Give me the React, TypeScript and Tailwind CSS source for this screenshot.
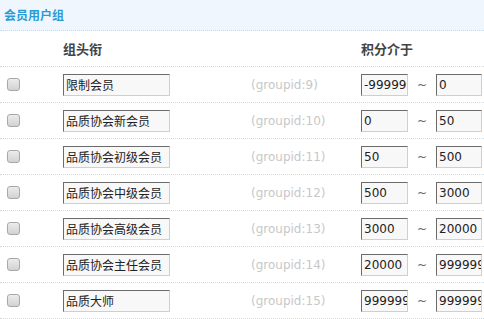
import React from 'react';

interface Group {
  id: number;
  name: string;
  min: string;
  max: string;
}

const groups: Group[] = [
  { id: 9, name: '限制会员', min: '-999999', max: '0' },
  { id: 10, name: '品质协会新会员', min: '0', max: '50' },
  { id: 11, name: '品质协会初级会员', min: '50', max: '500' },
  { id: 12, name: '品质协会中级会员', min: '500', max: '3000' },
  { id: 13, name: '品质协会高级会员', min: '3000', max: '20000' },
  { id: 14, name: '品质协会主任会员', min: '20000', max: '999999' },
  { id: 15, name: '品质大师', min: '999999', max: '9999999' },
];

const cjk = "font-['SimSun','Noto_Sans_CJK_SC',sans-serif]";
const rowLine = 'border-b border-dotted border-[#c9dcec]';

const Field: React.FC<{ value: string; className: string }> = ({ value, className }) => (
  <div
    className={`h-[22px] overflow-hidden whitespace-nowrap bg-[#f8f8f8] border border-t-[#6b6b6b] border-l-[#6b6b6b] border-b-[#cfcfcf] border-r-[#cfcfcf] pl-[2px] text-[12px] leading-[20px] text-[#222] ${className}`}
  >
    {value}
  </div>
);

const Check: React.FC = () => (
  <span className="block w-[13px] h-[13px] rounded-[3px] border border-[#a8a8a8] bg-gradient-to-b from-[#ececec] to-[#d2d2d2]" />
);

export default function App() {
  return (
    <div className={`w-[484px] h-[319px] overflow-hidden bg-white ${cjk}`}>
      <div className={`h-[31px] bg-[#eff6fd] px-[4px] ${rowLine} flex items-center`}>
        <span className="text-[12px] font-bold text-[#2a9bd6]">会员用户组</span>
      </div>
      <div className={`grid grid-cols-[63px_188px_110px_1fr] h-[36px] items-center ${rowLine}`}>
        <div />
        <div className="text-[13px] font-bold text-[#444]">组头衔</div>
        <div />
        <div className="text-[13px] font-bold text-[#444]">积分介于</div>
      </div>
      {groups.map((g) => (
        <div key={g.id} className={`grid grid-cols-[63px_188px_110px_1fr] h-[36px] items-center ${rowLine}`}>
          <div className="pl-[7px]">
            <Check />
          </div>
          <div>
            <Field value={g.name} className="w-[107px]" />
          </div>
          <div className="font-['DejaVu_Sans',sans-serif] text-[12px] text-[#c8c8c8]">(groupid:{g.id})</div>
          <div className="flex items-center font-['DejaVu_Sans',sans-serif]">
            <Field value={g.min} className="w-[47px] font-['DejaVu_Sans',sans-serif]" />
            <span className="w-[28px] text-center text-[12px] text-[#666]">~</span>
            <Field value={g.max} className="w-[46px] font-['DejaVu_Sans',sans-serif]" />
          </div>
        </div>
      ))}
    </div>
  );
}
